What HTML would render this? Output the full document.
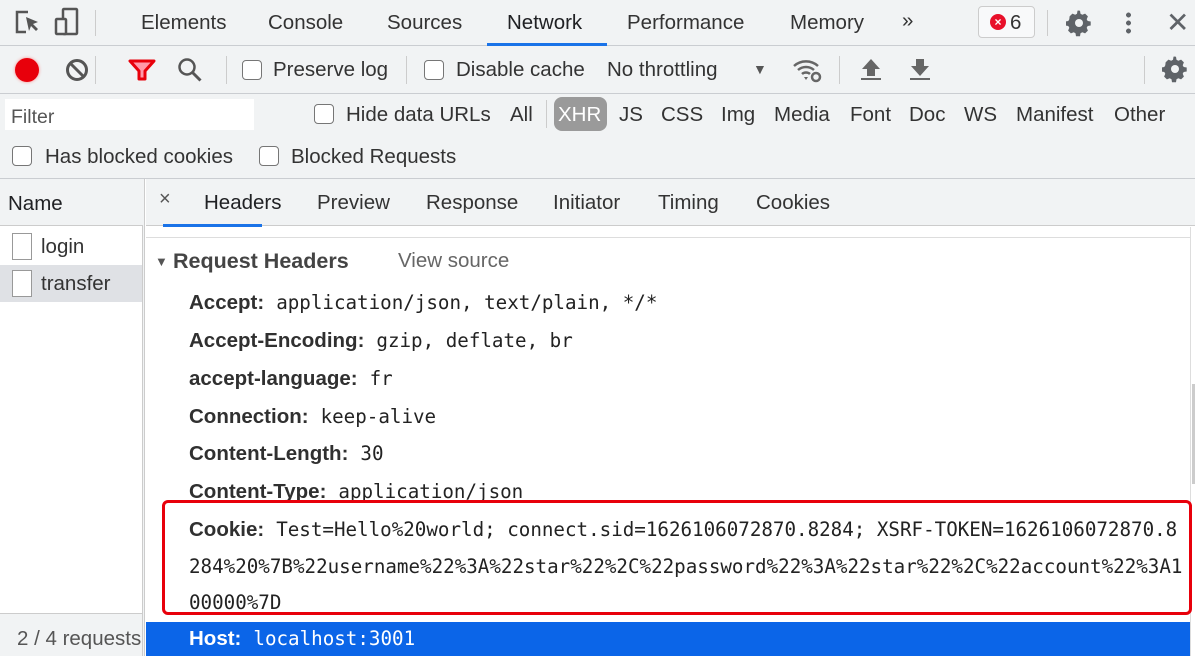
<!DOCTYPE html>
<html><head><meta charset="utf-8"><style>
*{margin:0;padding:0;box-sizing:border-box}
body{width:1195px;height:656px;overflow:hidden;background:#fff;font-family:"Liberation Sans",Arial,sans-serif;color:#202124;position:relative}
.abs{position:absolute;white-space:nowrap}
.bar{position:absolute;left:0;width:1195px;background:#f1f3f4;border-bottom:1px solid #cacdd1}
.t{font-size:20.5px;color:#333}
.cb{position:absolute;width:20px;height:20px;border:1.5px solid #767676;border-radius:4px;background:#fff}
.sep{position:absolute;width:1px;background:#ccc}
.k{font-weight:bold;color:#303030;font-size:20.5px;margin-right:12px}
.m{font-family:"DejaVu Sans Mono","Liberation Mono",monospace;font-size:19.2px;color:#222}
.row{position:absolute;left:189px;white-space:nowrap;height:38px;line-height:38px}
</style></head><body>
<svg width="0" height="0" style="position:absolute"><defs><g id="gear"><path d="M12 1.5l2 .3.5 3 1.8 1 2.8-1.2 2.8 2.8-1.2 2.8 1 1.8 3 .5v4l-3 .5-1 1.8 1.2 2.8-2.8 2.8-2.8-1.2-1.8 1-.5 3h-4l-.5-3-1.8-1-2.8 1.2-2.8-2.8 1.2-2.8-1-1.8-3-.5v-4l3-.5 1-1.8L3.6 7.4 6.4 4.6l2.8 1.2 1.8-1 .5-3z" fill="#5f6368"/><circle cx="13" cy="14" r="4" fill="#f1f3f4"/></g></defs></svg>
<div class="bar" style="top:0;height:46px"></div>
<svg class="abs" style="left:14px;top:9px" width="30" height="28" viewBox="0 0 30 28"><path d="M14 3H3v20h9" fill="none" stroke="#555" stroke-width="2.5"/><path d="M12 8l12 5-5 2 5 5-2 2-5-5-2 5z" fill="#555"/></svg>
<svg class="abs" style="left:54px;top:7px" width="26" height="30" viewBox="0 0 26 30"><rect x="9" y="2" width="14" height="25" rx="1" fill="none" stroke="#555" stroke-width="2.5"/><rect x="2" y="12" width="10" height="15" rx="1" fill="#f1f3f4" stroke="#555" stroke-width="2.5"/></svg>
<div class="sep" style="left:95px;top:10px;height:26px"></div>
<div class="abs t" style="left:141px;top:11px">Elements</div>
<div class="abs t" style="left:268px;top:11px">Console</div>
<div class="abs t" style="left:387px;top:11px">Sources</div>
<div class="abs t" style="left:507px;top:11px;color:#202124">Network</div>
<div class="abs" style="left:487px;top:43px;width:120px;height:3px;background:#1a73e8"></div>
<div class="abs t" style="left:627px;top:11px">Performance</div>
<div class="abs t" style="left:790px;top:11px">Memory</div>
<div class="abs t" style="left:902px;top:9px">»</div>
<div class="abs" style="left:978px;top:6px;width:57px;height:32px;border:1px solid #ccc;border-radius:4px;background:#f8f9fa"></div>
<div class="abs" style="left:990px;top:14px;width:16px;height:16px;border-radius:50%;background:#e8102a;color:#fff;font-size:12px;font-weight:bold;text-align:center;line-height:16px">×</div>
<div class="abs t" style="left:1010px;top:11px">6</div>
<div class="sep" style="left:1047px;top:10px;height:26px"></div>
<svg class="abs" style="left:1066px;top:9px" width="27" height="28" viewBox="0 0 27 28"><use href="#gear"/></svg>
<div class="abs" style="left:1126px;top:11px;width:5px;height:24px;background:radial-gradient(circle,#5f6368 2.3px,transparent 2.6px) 0 0/5px 8px"></div>
<div class="abs" style="left:1166px;top:6px;font-size:28px;color:#5f6368">✕</div>
<div class="bar" style="top:46px;height:48px"></div>
<div class="abs" style="left:15px;top:58px;width:24px;height:24px;border-radius:50%;background:#e8000b;box-shadow:0 0 3px #f88"></div>
<svg class="abs" style="left:65px;top:58px" width="24" height="24" viewBox="0 0 24 24"><circle cx="12" cy="12" r="9.5" fill="none" stroke="#555" stroke-width="3"/><path d="M5.5 5.5l13 13" stroke="#555" stroke-width="3"/></svg>
<div class="sep" style="left:95px;top:56px;height:28px"></div>
<svg class="abs" style="left:128px;top:59px" width="28" height="22" viewBox="0 0 28 22"><path d="M2 2h24l-9 10v8h-6v-8z" fill="#f9a" stroke="#e8000b" stroke-width="3" stroke-linejoin="round"/></svg>
<svg class="abs" style="left:177px;top:57px" width="26" height="26" viewBox="0 0 26 26"><circle cx="10" cy="10" r="7.5" fill="none" stroke="#555" stroke-width="2.5"/><path d="M15.5 15.5l8 8" stroke="#555" stroke-width="3"/></svg>
<div class="sep" style="left:226px;top:56px;height:28px"></div>
<div class="cb" style="left:242px;top:60px"></div>
<div class="abs t" style="left:273px;top:58px">Preserve log</div>
<div class="sep" style="left:406px;top:56px;height:28px"></div>
<div class="cb" style="left:424px;top:60px"></div>
<div class="abs t" style="left:456px;top:58px">Disable cache</div>
<div class="abs t" style="left:607px;top:58px">No throttling</div>
<div class="abs" style="left:753px;top:61px;font-size:14px;color:#555">▼</div>
<svg class="abs" style="left:791px;top:57px" width="34" height="26" viewBox="0 0 34 26"><path d="M3 9a18 18 0 0 1 24 0M7 13a12 12 0 0 1 16 0M11 17a6 6 0 0 1 8 0" fill="none" stroke="#666" stroke-width="2.5"/><path d="M13 20l2 3 2-3z" fill="#666"/><circle cx="25" cy="20" r="4" fill="none" stroke="#666" stroke-width="2.5"/></svg>
<div class="sep" style="left:839px;top:56px;height:28px"></div>
<svg class="abs" style="left:860px;top:58px" width="22" height="24" viewBox="0 0 22 24"><path d="M11 1l9 10h-5v7H7v-7H2z" fill="#666"/><rect x="1" y="20" width="20" height="2" fill="#666"/></svg>
<svg class="abs" style="left:909px;top:58px" width="22" height="24" viewBox="0 0 22 24"><path d="M11 18l9-10h-5V1H7v7H2z" fill="#666"/><rect x="1" y="20" width="20" height="2" fill="#666"/></svg>
<div class="sep" style="left:1144px;top:56px;height:28px"></div>
<svg class="abs" style="left:1162px;top:55px" width="27" height="28" viewBox="0 0 27 28"><use href="#gear"/></svg>
<div class="bar" style="top:94px;height:85px"></div>
<div class="abs" style="left:5px;top:99px;width:249px;height:31px;background:#fff"></div>
<div class="abs" style="left:11px;top:106px;font-size:19.5px;color:#555">Filter</div>
<div class="cb" style="left:314px;top:104px"></div>
<div class="abs t" style="left:346px;top:103px">Hide data URLs</div>
<div class="abs t" style="left:510px;top:103px">All</div>
<div class="sep" style="left:546px;top:100px;height:28px"></div>
<div class="abs" style="left:554px;top:97px;width:53px;height:34px;border-radius:8px;background:#9a9a9a"></div>
<div class="abs t" style="left:558px;top:103px;color:#fff">XHR</div>
<div class="abs t" style="left:619px;top:103px">JS</div>
<div class="abs t" style="left:661px;top:103px">CSS</div>
<div class="abs t" style="left:721px;top:103px">Img</div>
<div class="abs t" style="left:774px;top:103px">Media</div>
<div class="abs t" style="left:850px;top:103px">Font</div>
<div class="abs t" style="left:909px;top:103px">Doc</div>
<div class="abs t" style="left:964px;top:103px">WS</div>
<div class="abs t" style="left:1016px;top:103px">Manifest</div>
<div class="abs t" style="left:1114px;top:103px">Other</div>
<div class="cb" style="left:12px;top:146px"></div>
<div class="abs t" style="left:45px;top:145px">Has blocked cookies</div>
<div class="cb" style="left:259px;top:146px"></div>
<div class="abs t" style="left:291px;top:145px">Blocked Requests</div>
<div class="abs" style="left:0;top:179px;width:143px;height:477px;background:#fff;border-right:1px solid #ccc"></div>
<div class="abs" style="left:143px;top:179px;width:2px;height:477px;background:#f1f3f4;border-right:1px solid #ccc"></div>
<div class="abs" style="left:0;top:179px;width:143px;height:47px;background:#f1f3f4;border-bottom:1px solid #ccc"></div>
<div class="abs t" style="left:8px;top:192px;color:#202124">Name</div>
<div class="abs" style="left:12px;top:233px;width:20px;height:27px;border:1.5px solid #999;background:#fff"></div>
<div class="abs t" style="left:41px;top:235px">login</div>
<div class="abs" style="left:0;top:265px;width:142px;height:37px;background:#dfe1e5"></div>
<div class="abs" style="left:12px;top:270px;width:20px;height:27px;border:1.5px solid #999;background:#fff"></div>
<div class="abs t" style="left:41px;top:272px">transfer</div>
<div class="abs" style="left:0;top:613px;width:142px;height:43px;background:#f1f3f4;border-top:1px solid #ccc;overflow:hidden"><div class="abs t" style="left:17px;top:13px;color:#555">2 / 4 requests</div></div>
<div class="abs" style="left:146px;top:179px;width:1049px;height:47px;background:#f1f3f4;border-bottom:1px solid #ccc"></div>
<div class="abs" style="left:159px;top:188px;font-size:20px;color:#555">×</div>
<div class="abs t" style="left:204px;top:191px;color:#202124">Headers</div>
<div class="abs" style="left:163px;top:224px;width:99px;height:3px;background:#1a73e8"></div>
<div class="abs t" style="left:317px;top:191px">Preview</div>
<div class="abs t" style="left:426px;top:191px">Response</div>
<div class="abs t" style="left:553px;top:191px">Initiator</div>
<div class="abs t" style="left:658px;top:191px">Timing</div>
<div class="abs t" style="left:756px;top:191px">Cookies</div>
<div class="abs" style="left:146px;top:237px;width:1044px;height:1px;background:#ddd"></div>
<div class="abs" style="left:1190px;top:227px;width:1px;height:429px;background:#ddd"></div>
<div class="abs" style="left:1192px;top:384px;width:3px;height:100px;background:#ccc"></div>
<div class="abs" style="left:155px;top:254px;font-size:13px;color:#555">▼</div>
<div class="abs" style="left:173px;top:249px;font-size:21.5px;font-weight:bold;color:#444">Request Headers</div>
<div class="abs" style="left:398px;top:249px;font-size:20.5px;color:#666">View source</div>
<div class="row" style="top:284px"><span class="k">Accept:</span><span class="m">application/json, text/plain, */*</span></div>
<div class="row" style="top:322px"><span class="k">Accept-Encoding:</span><span class="m">gzip, deflate, br</span></div>
<div class="row" style="top:360px"><span class="k">accept-language:</span><span class="m">fr</span></div>
<div class="row" style="top:398px"><span class="k">Connection:</span><span class="m">keep-alive</span></div>
<div class="row" style="top:435px"><span class="k">Content-Length:</span><span class="m">30</span></div>
<div class="row" style="top:473px"><span class="k">Content-Type:</span><span class="m">application/json</span></div>
<div class="abs" style="left:162px;top:500px;width:1030px;height:115px;border:3px solid #e8000b;border-radius:6px;background:#fff"></div>
<div class="row" style="top:511px"><span class="k">Cookie:</span><span class="m">Test=Hello%20world; connect.sid=1626106072870.8284; XSRF-TOKEN=1626106072870.8</span></div>
<div class="row m" style="top:548px">284%20%7B%22username%22%3A%22star%22%2C%22password%22%3A%22star%22%2C%22account%22%3A1</div>
<div class="row m" style="top:584px">00000%7D</div>
<div class="abs" style="left:146px;top:622px;width:1044px;height:34px;background:#0b65e8"></div>
<div class="row" style="top:621px;height:36px;line-height:36px;color:#fff"><span class="k" style="color:#fff">Host:</span><span class="m" style="color:#fff">localhost:3001</span></div>
</body></html>
